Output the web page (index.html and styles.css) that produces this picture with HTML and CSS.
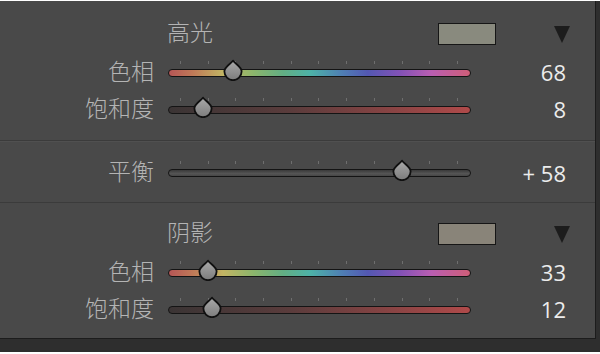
FILE: index.html
```html
<!DOCTYPE html>
<html lang="zh">
<head>
<meta charset="utf-8">
<link rel="stylesheet" href="styles.css">
</head>
<body>
<div class="screen">
  <div class="panel">
    <section class="group group-top">
      <div class="header">
        <span class="title">高光</span>
        <span class="swatch swatch-hl"></span>
        <span class="tri"></span>
      </div>
      <div class="row">
        <span class="label">色相</span>
        <div class="slider">
          <div class="ticks"><i></i><i></i><i></i><i></i><i></i><i></i><i></i><i></i><i></i><i></i><i></i></div>
          <div class="track hue"></div>
          <svg class="thumb" style="left:21.5%" viewBox="0 0 22 22" width="22" height="22"><use href="#drop"/></svg>
        </div>
        <span class="value">68</span>
      </div>
      <div class="row">
        <span class="label">饱和度</span>
        <div class="slider">
          <div class="ticks"><i></i><i></i><i></i><i></i><i></i><i></i><i></i><i></i><i></i><i></i><i></i></div>
          <div class="track sat"></div>
          <svg class="thumb" style="left:11.6%" viewBox="0 0 22 22" width="22" height="22"><use href="#drop"/></svg>
        </div>
        <span class="value">8</span>
      </div>
    </section>
    <section class="group group-mid">
      <div class="row">
        <span class="label">平衡</span>
        <div class="slider">
          <div class="ticks"><i></i><i></i><i></i><i></i><i></i><i></i><i></i><i></i><i></i><i></i><i></i></div>
          <div class="track bal"></div>
          <svg class="thumb" style="left:77.2%" viewBox="0 0 22 22" width="22" height="22"><use href="#drop"/></svg>
        </div>
        <span class="value">+ 58</span>
      </div>
    </section>
    <section class="group group-bot">
      <div class="header">
        <span class="title">阴影</span>
        <span class="swatch swatch-sh"></span>
        <span class="tri"></span>
      </div>
      <div class="row">
        <span class="label">色相</span>
        <div class="slider">
          <div class="ticks"><i></i><i></i><i></i><i></i><i></i><i></i><i></i><i></i><i></i><i></i><i></i></div>
          <div class="track hue"></div>
          <svg class="thumb" style="left:13.2%" viewBox="0 0 22 22" width="22" height="22"><use href="#drop"/></svg>
        </div>
        <span class="value">33</span>
      </div>
      <div class="row">
        <span class="label">饱和度</span>
        <div class="slider">
          <div class="ticks"><i></i><i></i><i></i><i></i><i></i><i></i><i></i><i></i><i></i><i></i><i></i></div>
          <div class="track sat"></div>
          <svg class="thumb" style="left:14.5%" viewBox="0 0 22 22" width="22" height="22"><use href="#drop"/></svg>
        </div>
        <span class="value">12</span>
      </div>
    </section>
  </div>
</div>
<svg class="defs" width="0" height="0">
  <defs>
    <linearGradient id="dropfill" x1="0" y1="0" x2="0" y2="1">
      <stop offset="0" stop-color="#aaaaaa"/>
      <stop offset="1" stop-color="#7c7c7c"/>
    </linearGradient>
    <symbol id="drop" viewBox="0 0 22 22">
      <path d="M11 1.6 C12.8 4.8 19.6 7.4 19.6 12.6 A8.6 8.6 0 0 1 2.4 12.6 C2.4 7.4 9.2 4.8 11 1.6 Z" fill="url(#dropfill)" stroke="#101010" stroke-width="1.8" stroke-linejoin="round"/>
    </symbol>
  </defs>
</svg>
</body>
</html>
```
FILE: styles.css
```css
html, body {
  margin: 0;
  padding: 0;
  background: #ffffff;
}
body {
  padding-top: 1px;
  width: 600px;
  height: 353px;
  overflow: hidden;
}
.screen {
  width: 600px;
  height: 351px;
  background: #2e2e2e;
}
.panel {
  width: 595px;
  height: 337px;
  background: #494949;
  border-right: 1px solid #1c1c1c;
  border-bottom: 1px solid #1c1c1c;
  display: flex;
  flex-direction: column;
}
.group {
  display: flex;
  flex-direction: column;
}
.group-top {
  padding-top: 15px;
  height: 124px;
  gap: 1px;
}
.group-mid {
  border-top: 1px solid #3b3b3b;
  border-bottom: 1px solid #3b3b3b;
  box-shadow: inset 0 1px 0 #505050;
  height: 61px;
  justify-content: center;
}
.group-bot {
  padding-top: 13px;
  gap: 1px;
}
.header {
  width: 570px;
  height: 36px;
  display: flex;
  align-items: center;
  padding-left: 167px;
  box-sizing: border-box;
}
.title {
  font-family: "Noto Sans CJK SC", sans-serif;
  font-size: 23px;
  font-weight: 300;
  color: #b4b4b4;
  line-height: 30px;
  padding-bottom: 6px;
}
.swatch {
  margin-left: auto;
  width: 56px;
  height: 20px;
  border: 1px solid #161616;
}
.swatch-hl { background: #898a7e; }
.swatch-sh { background: #898479; }
.tri {
  margin-left: 58px;
  width: 0;
  height: 0;
  border-left: 8px solid transparent;
  border-right: 8px solid transparent;
  border-top: 17px solid #1c1c1c;
}
.row {
  display: grid;
  grid-template-columns: 154px 303px 81px;
  column-gap: 14px;
  height: 36px;
  align-items: center;
}
.label {
  text-align: right;
  font-family: "Noto Sans CJK SC", sans-serif;
  font-size: 23px;
  font-weight: 300;
  color: #b4b4b4;
  line-height: 30px;
  padding-bottom: 4px;
}
.value {
  text-align: right;
  font-family: "Open Sans", sans-serif;
  font-size: 22px;
  color: #ececec;
  line-height: 36px;
  padding-top: 1px;
}
.slider {
  position: relative;
  height: 36px;
  display: flex;
  flex-direction: column;
  justify-content: center;
  gap: 5px;
}
.ticks {
  display: flex;
  justify-content: space-between;
  padding: 0 13px 0 12px;
  height: 3px;
  margin-top: -6px;
}
.ticks i {
  width: 1px;
  height: 3px;
  background: #6e6e6e;
}
.track {
  height: 6px;
  border: 1px solid #141414;
  border-radius: 4px;
}
.hue {
  background: linear-gradient(90deg, #b65656 0%, #c07a58 8%, #c2b564 18%, #8cb56c 28%, #62ae84 38%, #4db2a8 47%, #4f7cb4 58%, #5358b2 66%, #8452b6 77%, #b95eb2 87%, #cf5e78 100%);
}
.sat {
  background: linear-gradient(90deg, #3a3434 0%, #5a3c3c 40%, #8a4444 75%, #b04a4a 100%);
}
.bal {
  background: linear-gradient(180deg, #3a3a3a 0%, #555555 60%, #464646 100%);
}
.thumb {
  position: absolute;
  top: 5px;
  margin-left: -11px;
}
.defs {
  position: absolute;
  width: 0;
  height: 0;
}
```
